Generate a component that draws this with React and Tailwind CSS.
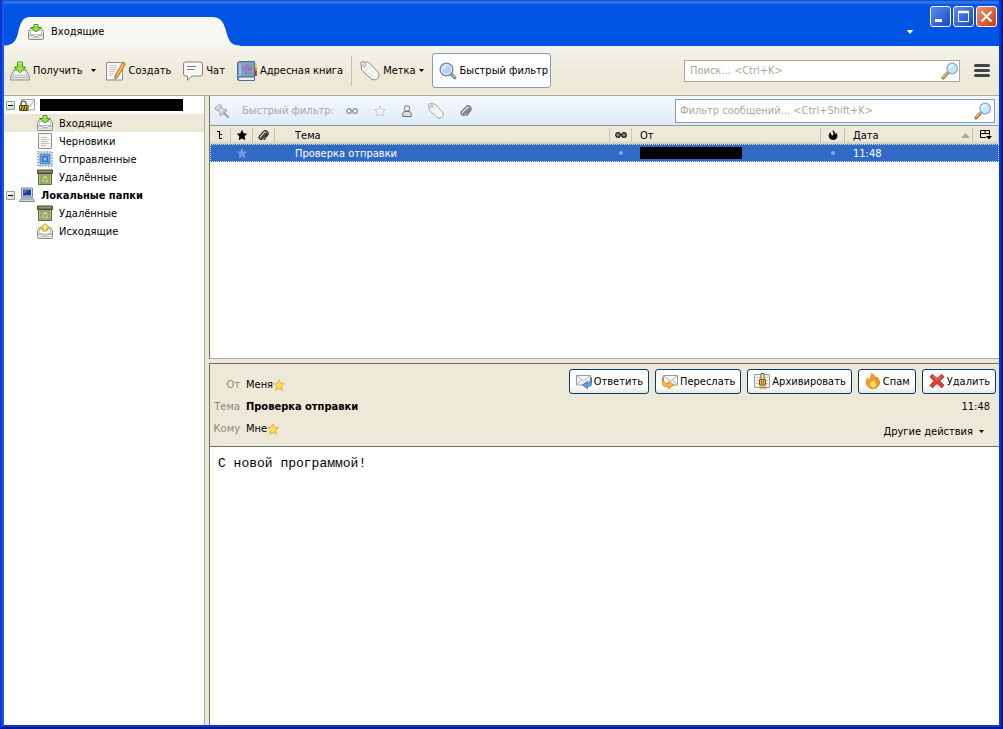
import React, { useState } from 'react';

/* ---------- icons ---------- */

const GetMailIcon = ({ className }) => (
  <svg className={className} viewBox="0 0 20 20" fill="none">
    <path d="M4 8.500h12l3.400 7.500v3H.6v-3z" fill="#e4e4e2" stroke="#8f8f8c" />
    <path d="M3 14l1.500-4h11l1.500 4z" fill="#fbfbfb" stroke="#bcbcb8" strokeWidth=".8" />
    <path d="M1.500 16.300h17" stroke="#b4b4b0" />
    <path d="M7.500 1h5v5h3.300L10 11.800 4.200 6h3.300z" fill="#9fe04a" stroke="#4c9a1a" />
    <path d="M8.500 2.200h3" stroke="#d3f5a4" />
  </svg>
);

const WriteIcon = ({ className }) => (
  <svg className={className} viewBox="0 0 20 20" fill="none">
    <path d="M.5 1.500h16v17.500H.5z" fill="#fafafa" stroke="#8b8b89" />
    <path d="M3 4.500h8M3 6.500h9M3 8.500h8M3 10.500h6M3 12.500h5M3 14.500h4" stroke="#cccccc" />
    <path d="M17 1.200l2.600 1.600-7.600 13-3 2.400.2-4z" fill="#f49a2d" stroke="#b3661a" strokeWidth=".8" />
    <path d="M17.700 2.700L10.500 15" stroke="#ffd08a" />
    <path d="M9.200 14.200l2.800 1.600-3 2.400z" fill="#f0dcb8" stroke="#6b5136" strokeWidth=".6" />
  </svg>
);

const ChatIcon = ({ className }) => (
  <svg className={className} viewBox="0 0 20 20" fill="none">
    <path d="M2.500 1h15a2 2 0 0 1 2 2v10a2 2 0 0 1-2 2H9l-4.500 4.300v-4.300h-2a2 2 0 0 1-2-2V3a2 2 0 0 1 2-2z" fill="#f8f8f7" stroke="#858583" />
    <path d="M4 5.500h9M4 8.500h7" stroke="#77787a" strokeWidth="1.200" />
  </svg>
);

const BookIcon = ({ className }) => (
  <svg className={className} viewBox="0 0 20 20" fill="none">
    <path d="M17 2h2.800v4.500H17z" fill="#f3d33c" />
    <path d="M17 6.500h2.800V11H17z" fill="#e0862a" />
    <path d="M17 10h2.800v5H17z" fill="#c9281f" />
    <path d="M2.500.5h15v15.500H4v3.500H2a1.500 1.500 0 0 1-1.500-1.500V2.500a2 2 0 0 1 2-2z" fill="#7f9fc8" stroke="#4c6c99" />
    <path d="M3 16h14.500v3.500H3a1.700 1.700 0 0 1 0-3.500z" fill="#e8edf4" stroke="#4c6c99" />
    <path d="M3 2v13" stroke="#b5cae4" strokeWidth="1.300" />
    <circle cx="10.500" cy="8" r="1.700" stroke="#a55f9c" />
    <path d="M12.200 6.300v2.500c0 1.300 2.200 1 2.200-1 0-5.400-8-4.800-8 .2 0 4.300 4.400 5.200 6.600 3.600" stroke="#a55f9c" strokeWidth=".9" />
  </svg>
);

const TagIcon = ({ className }) => (
  <svg className={className} viewBox="0 0 20 20" fill="none">
    <path d="M1.500.9l5.800.3c1 .1 1.900.6 2.700 1.400l7.700 8.200c1.500 1.700 1.900 4.400.2 6.300-1.600 1.900-4.600 2.400-6.500.9L3 10.400c-.8-.7-1.300-1.500-1.500-2.500L.8 2z" fill="#f8f8f5" stroke="#898986" />
    <path d="M5.500 10l5-6M7.500 11.500l5.500 3M9.500 8l5 4" stroke="#d8d8d3" strokeWidth=".9" />
    <circle cx="4.400" cy="4.400" r="1.600" fill="#fff" stroke="#8d8d8a" strokeWidth=".9" />
  </svg>
);

const FilterLensIcon = ({ className }) => (
  <svg className={className} viewBox="0 0 18 18" fill="none">
    <path d="M12 12l3.800 3.600" stroke="#6b7b8c" strokeWidth="3.200" strokeLinecap="round" />
    <path d="M12.500 12.300l3.300 3" stroke="#b5c6d8" strokeWidth="1.200" strokeLinecap="round" />
    <circle cx="7.500" cy="7.500" r="6.400" fill="#b4d1f3" stroke="#7388a0" strokeWidth="1.300" />
    <circle cx="7.500" cy="7.500" r="5" stroke="#e8f3ff" />
    <path d="M4.500 7.500a3 3 0 0 1 3-3" stroke="#fff" strokeWidth="1.300" />
  </svg>
);

const SearchIcon = ({ className }) => (
  <svg className={className} viewBox="0 0 18 18" fill="none">
    <path d="M2 15.800l5.200-5.300" stroke="#a0703a" strokeWidth="3.200" strokeLinecap="round" />
    <path d="M2.100 15.300l4.500-4.600" stroke="#efb570" strokeWidth="1.500" strokeLinecap="round" />
    <circle cx="11.200" cy="6.500" r="5.300" fill="#c6e6fd" stroke="#8aa9d0" strokeWidth="1.200" />
    <path d="M8 6a3.400 3.400 0 0 1 3.500-2.600" stroke="#fff" strokeWidth="1.500" strokeLinecap="round" />
  </svg>
);

const TrayShape = () => (
  <>
    <path d="M2.500 4.500h11l2 3v6.500a1.500 1.500 0 0 1-1.500 1.500H2A1.500 1.500 0 0 1 .5 14V7.500z" fill="#eeeeec" stroke="#8b8b88" />
    <path d="M2.500 6.500h11v4h-11z" fill="#fff" stroke="#b9b9b5" strokeWidth=".8" />
    <path d="M1 11.200h4l1 1.500h4l1-1.500h4" stroke="#a2a29e" />
    <path d="M2.500 13.800h11" stroke="#c8c8c4" />
  </>
);

const InboxIcon = ({ className }) => (
  <svg className={className} viewBox="0 0 16 16" fill="none">
    <TrayShape />
    <path d="M6 .5h4v3h3.300L8 8 2.700 3.500H6z" fill="#94dc4c" stroke="#479417" />
    <path d="M7 1.500h2" stroke="#cdf3a0" />
  </svg>
);

const OutboxIcon = ({ className }) => (
  <svg className={className} viewBox="0 0 16 16" fill="none">
    <TrayShape />
    <path d="M6 8h4V5h3.300L8 .6 2.700 5H6z" fill="#fbe887" stroke="#c59a2c" />
  </svg>
);

const DraftsIcon = ({ className }) => (
  <svg className={className} viewBox="0 0 16 16" fill="none">
    <path d="M1.500.5h13v15h-13z" fill="#f6f6f5" stroke="#8f8f8c" />
    <path d="M4 4.500h6M4 6.500h8M4 8.500h7M4 10.500h8M4 12.500h5" stroke="#bdbdbb" />
  </svg>
);

const SentIcon = ({ className }) => (
  <svg className={className} viewBox="0 0 16 16" fill="none">
    <path d="M1 1h14v14H1z" fill="#f5f8fb" stroke="#7c8b9b" strokeWidth="1.400" strokeDasharray="1.500 1.300" />
    <path d="M3 3h10v10H3z" fill="#6ba6e6" stroke="#3f7cc4" />
    <path d="M5.500 5.500h5v5h-5z" fill="#4f8dd8" stroke="#3570b8" />
    <circle cx="8" cy="8" r="1.500" fill="#9cc8f5" />
  </svg>
);

const TrashIcon = ({ className }) => (
  <svg className={className} viewBox="0 0 16 16" fill="none">
    <path d="M1.500 4.500h13v11h-13z" fill="#93a862" stroke="#5e6b3a" />
    <path d="M.5 1h15v3.500H.5z" fill="#6f7350" stroke="#474a30" />
    <path d="M1.500 2.300h13" stroke="#9c9f7a" />
    <path d="M2.500 5.500v9M13.500 5.500v9" stroke="#b4c586" />
    <path d="M6 9.500l2-2 2 2M10.500 10.500l-1 2.500H8M5.500 10.500l1 2.500" stroke="#d5e2b0" strokeWidth="1.100" />
  </svg>
);

const AccountIcon = ({ className }) => (
  <svg className={className} viewBox="0 0 16 16" fill="none">
    <path d="M2.500 2.500h13v10.500h-13z" fill="#f7f7f5" stroke="#a5a5a2" />
    <path d="M9 8l2 1.500 4-6" stroke="#a9a9a6" />
    <path d="M2 8V6.500a2.500 2.500 0 0 1 5 0V8" stroke="#55523e" strokeWidth="1.200" />
    <path d="M.5 8.500h8.500v5H.5z" fill="#dcc04c" stroke="#5b4a10" />
    <path d="M2 13l1.500-4M4.500 13L6 9M7 13l1-3" stroke="#3c320c" strokeWidth="1.100" />
  </svg>
);

const ComputerIcon = ({ className }) => (
  <svg className={className} viewBox="0 0 16 16" fill="none">
    <path d="M2.500 1h11v9h-11z" fill="#d4d8de" stroke="#7d8796" />
    <path d="M4 2.500h8v6H4z" fill="#1f3f94" />
    <path d="M4.500 3h5l-5 4z" fill="#4f74cc" />
    <path d="M2.500 11h11l2 3.500H.5z" fill="#e1e3e7" stroke="#7d8796" />
    <path d="M3 12.700h10" stroke="#9aa2af" />
  </svg>
);

const PinIcon = ({ className }) => (
  <svg className={className} viewBox="0 0 16 16" fill="none">
    <path d="M9.500 9.500L14 14" stroke="#9a9c9f" strokeWidth="2" strokeLinecap="round" />
    <path d="M1 5.200L5.600 1.300l1.800 1.500-.3 1.600 2.600 2 2.300-.2 1 1.300-6 5.300-1.300-1 .4-2.300-2.200-2.500-1.600.1z" fill="#dfe2e6" stroke="#97999d" />
    <path d="M4 6.500l3.200-2.600M7 11l4.500-4" stroke="#a9abae" />
  </svg>
);

const GlassesIcon = ({ className, dark }) => (
  <svg className={className} viewBox="0 0 12 6" fill="none">
    <circle cx="3" cy="3" r="2.300" fill={dark ? '#8d8d85' : '#f2f4f5'} stroke={dark ? '#1c1c1c' : '#8a8f93'} strokeWidth="1.200" />
    <circle cx="9" cy="3" r="2.300" fill={dark ? '#8d8d85' : '#f2f4f5'} stroke={dark ? '#1c1c1c' : '#8a8f93'} strokeWidth="1.200" />
    <path d="M5 2.500h2" stroke={dark ? '#1c1c1c' : '#8a8f93'} strokeWidth="1.200" />
  </svg>
);

const StarIcon = ({ className, fill, stroke }) => (
  <svg className={className} viewBox="0 0 12 12" fill="none">
    <path d="M6 .8l1.600 3.400 3.700.5-2.700 2.600.7 3.900L6 9.400l-3.300 1.800.7-3.900L.7 4.700l3.700-.5z" fill={fill} stroke={stroke} strokeLinejoin="round" />
  </svg>
);

const PersonIcon = ({ className }) => (
  <svg className={className} viewBox="0 0 10 12" fill="none">
    <path d="M.7 11.500V8.700C.7 7 2 6.500 5 6.500s4.300.5 4.300 2.200v2.800z" fill="#dededc" stroke="#6f6f6c" />
    <circle cx="5" cy="3.500" r="2.700" fill="#f2f2f0" stroke="#6f6f6c" />
  </svg>
);

const ClipIcon = ({ className, color }) => (
  <svg className={className} viewBox="0 0 12 12" fill="none">
    <path d="M3.200 8.600l4.600-5c1-1 2.300.2 1.400 1.300L5 9.500C3.300 11.300.2 9.300 1.400 6.900L6.200 1.600C8.300-.4 12 1.800 10.900 5L6.700 10.500" stroke={color} strokeWidth="1.300" strokeLinecap="round" />
    <path d="M5 8l3-3.200" stroke={color} strokeWidth=".7" strokeLinecap="round" />
  </svg>
);

const ThreadIcon = () => (
  <svg className="h-2.5 w-1.5" viewBox="0 0 6 10" fill="none">
    <path d="M0 1.500h3M2.500 1v7.500H5M2.500 4.500H5" stroke="#000" />
  </svg>
);

const JunkIcon = () => (
  <svg className="h-2.5 w-2.5" viewBox="0 0 10 10">
    <path d="M4.700 0c-.5 1.600.9 2.600.8 4-.1 1.200-1 1.700-1.800 1.200C2.800 4.600 3 3.300 2.700 2.300 1.300 3.200.5 4.700.8 6.400 1.100 8.500 3 10 5.100 10c2.400 0 4.200-1.800 4.300-4.100.1-1.500-.7-2.600-1.700-3.400.1 1-.1 1.700-.6 2C7.300 2.700 6.300 1 4.700 0z" />
  </svg>
);

const PickerIcon = () => (
  <svg className="h-2.5 w-3" viewBox="0 0 12 10" fill="none">
    <path d="M.5.5h9v5M.5.5v7H6M.5 3.500h9M5 .5v3" stroke="#000" />
    <path d="M6 6h6L9 9.500z" fill="#000" />
  </svg>
);

const ReplyIcon = () => (
  <svg className="h-4 w-4" viewBox="0 0 16 16" fill="none">
    <path d="M.5 2.500h14v9.500H.5z" fill="#fafafa" stroke="#9a9a97" />
    <path d="M1 3l6.500 5L14 3M1 11.500l4-4.500" stroke="#ababa8" />
    <path d="M15.500 4.500v6c0 2-1 3-3 3h-1v2.200L6.500 12l5-3.700v2.200c1.500 0 2.500-2 4-6z" fill="#6d9be0" stroke="#3a62a8" strokeWidth=".8" />
  </svg>
);

const ForwardIcon = () => (
  <svg className="h-4 w-4" viewBox="0 0 16 16" fill="none">
    <path d="M1.500 2.500h14v9.500h-14z" fill="#fafafa" stroke="#9a9a97" />
    <path d="M2 3l6.500 5L15 3M15 11.500l-4-4.500" stroke="#ababa8" />
    <path d="M.5 4.500v6c0 2 1 3 3 3h3v2.200l5.500-3.900-5.500-3.500v2.200h-2C3 10.500 1.500 8.500.5 4.500z" fill="#fbb64a" stroke="#cf7d1a" strokeWidth=".8" />
  </svg>
);

const ArchiveIcon = () => (
  <svg className="h-4 w-4" viewBox="0 0 16 16" fill="none">
    <path d="M.5 1.500h15v13H.5z" fill="#f1f1ef" stroke="#9b9b98" />
    <path d="M2 4.500h12M2 7.500h12M2 10.500h12" stroke="#c5c5c2" />
    <path d="M7 .5h3V7H7z" fill="#f4ead0" stroke="#7a5a1c" />
    <path d="M5.500 6.500h6v5.500h-6z" fill="#e8b23e" stroke="#7a5310" />
    <path d="M7.500 8.200h2v2h-2z" fill="#fff" stroke="#7a5310" strokeWidth=".8" />
    <path d="M5.500 14.500h7" stroke="#c58a1c" strokeWidth="2" />
  </svg>
);

const SpamIcon = () => (
  <svg className="h-4 w-4" viewBox="0 0 16 16" fill="none">
    <path d="M6.500.5c3.500 1.700 4.700 4.200 4 6.800 1-.5 1.500-1.800 1.300-3.300 2 1.700 2.900 3.700 2.700 5.800-.4 3.300-3 5.700-6.500 5.700-3.500 0-6.200-2.200-6.600-5.500-.2-2 .3-3.600 1.400-5 .1 1.400.6 2.300 1.700 2.800C4.200 5 7.700 3.700 6.500.5z" fill="#f79a1e" stroke="#df7412" strokeWidth=".8" />
    <path d="M8.300 7c1 2 2.700 2.600 2.700 4.700 0 1.700-1.300 2.800-2.900 2.800-1.700 0-3-1.200-3-2.900C5.100 9.500 7.600 9 8.300 7z" fill="#ffe77a" />
  </svg>
);

const DeleteIcon = () => (
  <svg className="h-4 w-4" viewBox="0 0 16 16" fill="none">
    <path d="M3.300 1.500L8 5.500l4.700-4L15 3.700 10.700 8l4.300 4.300-2.300 2.500L8 10.500l-4.700 4.300L1 12.300 5.300 8 1 3.700z" fill="#e03a34" stroke="#a3211c" strokeWidth=".9" strokeLinejoin="round" />
    <path d="M3.300 3L8 7l4.700-4" stroke="#f0847c" />
  </svg>
);

const Caret = ({ className }) => (
  <svg className={className} viewBox="0 0 5 3">
    <path d="M0 0h5L2.500 3z" fill="currentColor" />
  </svg>
);

/* ---------- data ---------- */

const folderTree = [
  {
    id: 'account',
    icon: AccountIcon,
    redacted: true,
    children: [
      { id: 'inbox', label: 'Входящие', icon: InboxIcon },
      { id: 'drafts', label: 'Черновики', icon: DraftsIcon },
      { id: 'sent', label: 'Отправленные', icon: SentIcon },
      { id: 'trash', label: 'Удалённые', icon: TrashIcon },
    ],
  },
  {
    id: 'local',
    label: 'Локальные папки',
    icon: ComputerIcon,
    children: [
      { id: 'local-trash', label: 'Удалённые', icon: TrashIcon },
      { id: 'outbox', label: 'Исходящие', icon: OutboxIcon },
    ],
  },
];

const messageActions = [
  { label: 'Ответить', icon: ReplyIcon },
  { label: 'Переслать', icon: ForwardIcon },
  { label: 'Архивировать', icon: ArchiveIcon },
  { label: 'Спам', icon: SpamIcon },
  { label: 'Удалить', icon: DeleteIcon },
];

/* ---------- parts ---------- */

const TitleBar = () => (
  <header className="flex justify-between bg-[linear-gradient(to_bottom,#0a3fc4_0px,#3a7ef0_2px,#0054e3_5px)] h-[46px]">
    <div className="flex items-end">
      <svg className="h-[29px] w-6" viewBox="0 0 24 29">
        <path d="M0 29V28.500C7 28.500 11 26 13.500 18 16 8 17 0 26 0V29z" fill="#f8f7f1" />
      </svg>
      <div className="flex items-center gap-[7px] h-[29px] w-[184px] bg-[#f8f7f1]">
        <InboxIcon className="h-4 w-4" />
        <span>Входящие</span>
      </div>
      <svg className="h-[29px] w-7" viewBox="0 0 28 29">
        <path d="M0 0C8 0 11 4 13.500 12 16.500 23 18 28.500 28 28.500V29H0z" fill="#f8f7f1" />
      </svg>
    </div>
    <div className="flex gap-4 pr-[2px] pt-1.5">
      <button aria-label="Список вкладок" className="self-end pb-3 text-white">
        <Caret className="h-1 w-2" />
      </button>
      <div className="flex gap-0.5">
        <button aria-label="Свернуть" className="h-[21px] w-[21px] rounded-[3px] border border-white bg-gradient-to-br from-[#5b8cf2] to-[#1a48c4]">
          <svg viewBox="0 0 19 19"><path d="M4 12h7v3H4z" fill="#fff" /></svg>
        </button>
        <button aria-label="Развернуть" className="h-[21px] w-[21px] rounded-[3px] border border-white bg-gradient-to-br from-[#5b8cf2] to-[#1a48c4]">
          <svg viewBox="0 0 19 19" fill="none"><path d="M4.500 5v9.500h10V5" stroke="#fff" /><path d="M4 5h11" stroke="#fff" strokeWidth="2.500" /></svg>
        </button>
        <button aria-label="Закрыть" className="h-[21px] w-[21px] rounded-[3px] border border-white bg-gradient-to-br from-[#f0906f] to-[#c9360f]">
          <svg viewBox="0 0 19 19" fill="none"><path d="M4.500 4.500l10 10M14.500 4.500l-10 10" stroke="#fff" strokeWidth="2.200" /></svg>
        </button>
      </div>
    </div>
  </header>
);

const Toolbar = ({ onToggleFilter }) => (
  <div className="flex items-center gap-2 h-[50px] pl-1.5 pr-[9px] border-b border-[#aca899] bg-gradient-to-b from-[#f5f4ec] to-[#ece9d8] to-60%">
    <button className="flex items-center gap-[3px]">
      <GetMailIcon className="h-5 w-5" />Получить
    </button>
    <button aria-label="Получить: меню"><Caret className="h-[3px] w-[5px]" /></button>
    <button className="flex items-center gap-[3px] pl-0.5 pr-1">
      <WriteIcon className="h-5 w-5" />Создать
    </button>
    <button className="flex items-center gap-[3px] pr-1">
      <ChatIcon className="h-5 w-5" />Чат
    </button>
    <button className="flex items-center gap-[3px]">
      <BookIcon className="h-5 w-5" />Адресная книга
    </button>
    <div className="h-[30px] w-px bg-[#c5c2b2]" />
    <button className="flex items-center gap-[3px]">
      <TagIcon className="h-5 w-5" />Метка
      <Caret className="h-[3px] w-[5px]" />
    </button>
    <button
      onClick={onToggleFilter}
      className="flex items-center gap-[3px] h-[35px] pl-1.5 pr-0.5 rounded-[3px] border border-[#7f9db9] bg-white"
    >
      <FilterLensIcon className="h-[18px] w-[18px]" />Быстрый фильтр
    </button>
    <div className="flex-1 flex items-center justify-end gap-3.5">
      <label className="flex items-center w-[276px] h-[22px] pl-[5px] pr-0 border border-[#aca899] bg-white">
        <input type="text" aria-label="Поиск" placeholder="Поиск... <Ctrl+K>" className="flex-1 min-w-0 bg-transparent outline-none placeholder:text-[#aca899]" />
        <SearchIcon className="h-[18px] w-[18px]" />
      </label>
      <button aria-label="Меню" className="flex flex-col gap-0.5">
        <span className="h-[3px] w-4 rounded-full bg-[#3f4448]" />
        <span className="h-[3px] w-4 rounded-full bg-[#3f4448]" />
        <span className="h-[3px] w-4 rounded-full bg-[#3f4448]" />
      </button>
    </div>
  </div>
);

const FolderTree = ({ selected, onSelect }) => {
  const [closed, setClosed] = useState({});

  return (
    <nav className="w-[201px] shrink-0 border-r border-[#aca899] bg-white">
      {folderTree.map((account) => {
        const Icon = account.icon;
        return (
          <div key={account.id}>
            <div className="flex items-center h-[18px] pl-0.5">
              <button
                aria-label={closed[account.id] ? 'Развернуть' : 'Свернуть'}
                onClick={() => setClosed({ ...closed, [account.id]: !closed[account.id] })}
                className="flex items-center justify-center h-[9px] w-[9px] rounded-[1px] border border-[#7b9ebd] bg-gradient-to-br from-white to-[#d8d2c4]"
              >
                <span className="h-px w-[5px] bg-black" />
              </button>
              <Icon className="h-4 w-4 ml-1" />
              {account.redacted ? (
                <span className="h-3 w-[143px] ml-[5px] bg-black" />
              ) : (
                <span className="ml-1.5 font-bold">{account.label}</span>
              )}
            </div>
            {!closed[account.id] && account.children.map((folder) => {
              const FolderIcon = folder.icon;
              return (
                <button
                  key={folder.id}
                  onClick={() => onSelect(folder.id)}
                  className={`flex items-center gap-1.5 w-full h-[18px] pl-[33px] ${selected === folder.id ? 'bg-[#ece9d8]' : ''}`}
                >
                  <FolderIcon className="h-4 w-4" />
                  {folder.label}
                </button>
              );
            })}
          </div>
        );
      })}
    </nav>
  );
};

const QuickFilterBar = () => (
  <div className="flex items-center h-[30px] pl-1 pr-1 border-b border-[#919b9c] bg-gradient-to-b from-[#f4f9fe] to-[#dfebf9]">
    <button aria-label="Закрепить фильтр"><PinIcon className="h-4 w-4" /></button>
    <span className="ml-3 text-[#aca899]">Быстрый фильтр:</span>
    <div className="flex items-center gap-4 ml-3">
      <button aria-label="Непрочитанные"><GlassesIcon className="h-1.5 w-3" /></button>
      <button aria-label="Избранные"><StarIcon className="h-3 w-3" fill="#f1f5fa" stroke="#c3c7cc" /></button>
      <button aria-label="Контакт"><PersonIcon className="h-3 w-2.5" /></button>
      <button aria-label="Метки"><TagIcon className="h-4 w-4" /></button>
      <button aria-label="Вложения"><ClipIcon className="h-3 w-3" color="#6f7275" /></button>
    </div>
    <div className="flex-1 flex justify-end">
      <label className="flex items-center w-80 h-6 pl-1 pr-0.5 border border-[#7f9db9] bg-white">
        <input type="text" aria-label="Фильтр сообщений" placeholder="Фильтр сообщений... <Ctrl+Shift+K>" className="flex-1 min-w-0 bg-transparent outline-none placeholder:text-[#aca899]" />
        <SearchIcon className="h-[18px] w-[18px]" />
      </label>
    </div>
  </div>
);

const HeadCell = ({ children, className = '' }) => (
  <th scope="col" className="p-0 font-normal">
    <div className={`flex items-center h-3.5 border-r border-[#c9c5b3] ${className}`}>{children}</div>
  </th>
);

const MessageList = () => (
  <div className="flex-1 min-h-0 border-b border-[#aca899] bg-white">
    <table className="w-full table-fixed text-left">
      <colgroup>
        <col className="w-[21px]" />
        <col className="w-[22px]" />
        <col className="w-[22px]" />
        <col />
        <col className="w-[22px]" />
        <col className="w-[189px]" />
        <col className="w-6" />
        <col className="w-32" />
        <col className="w-[26px]" />
      </colgroup>
      <thead>
        <tr className="h-[18px] bg-gradient-to-b from-[#ece9d8] from-80% to-[#d3cfbf]">
          <HeadCell className="pl-[7px]"><ThreadIcon /></HeadCell>
          <HeadCell className="justify-center"><StarIcon className="h-3 w-3" fill="#000" stroke="none" /></HeadCell>
          <HeadCell className="justify-center"><ClipIcon className="h-[11px] w-[11px]" color="#222" /></HeadCell>
          <HeadCell className="pl-5">Тема</HeadCell>
          <HeadCell className="justify-center"><GlassesIcon className="h-1.5 w-3" dark /></HeadCell>
          <HeadCell className="pl-2">От</HeadCell>
          <HeadCell className="justify-center"><JunkIcon /></HeadCell>
          <HeadCell className="justify-between pl-2 pr-0.5">
            Дата
            <svg className="h-[5px] w-[9px]" viewBox="0 0 9 5"><path d="M4.500 0L9 5H0z" fill="#aca899" /></svg>
          </HeadCell>
          <HeadCell className="justify-center"><PickerIcon /></HeadCell>
        </tr>
      </thead>
      <tbody>
        <tr className="h-[18px] bg-[#316ac5] text-white outline-1 outline-dotted outline-[#d5e2f4] -outline-offset-1">
          <td className="p-0" />
          <td className="p-0"><StarIcon className="h-3 w-3 mx-auto" fill="#6f97da" stroke="none" /></td>
          <td className="p-0" />
          <td className="py-0 pl-5 pr-0">Проверка отправки</td>
          <td className="p-0"><div className="h-1 w-1 mx-auto rounded-full bg-[#86abe6]" /></td>
          <td className="py-0 pl-2 pr-0"><div className="h-3 w-[102px] bg-black" /></td>
          <td className="p-0"><div className="h-1 w-1 mx-auto rounded-full bg-[#86abe6]" /></td>
          <td className="py-0 pl-2 pr-0">11:48</td>
          <td className="p-0" />
        </tr>
      </tbody>
    </table>
  </div>
);

const MessageHeader = () => (
  <div className="flex justify-between border-b border-[#716f64] bg-[#ece9d8] pb-1.5">
    <dl className="grid grid-cols-[30px_1fr] auto-rows-[22px] items-center gap-x-1.5 pt-2.5">
      <dt className="text-right text-[#8a877a]">От</dt>
      <dd className="flex items-center">Меня<StarIcon className="h-3 w-3" fill="#fddc52" stroke="#e3b23a" /></dd>
      <dt className="text-right text-[#8a877a]">Тема</dt>
      <dd className="font-bold">Проверка отправки</dd>
      <dt className="text-right text-[#8a877a]">Кому</dt>
      <dd className="flex items-center">Мне<StarIcon className="h-3 w-3" fill="#fddc52" stroke="#e3b23a" /></dd>
    </dl>
    <div className="flex flex-col items-end pt-[5px] pr-[3px]">
      <div className="flex gap-1.5">
        {messageActions.map(({ label, icon: Icon }) => (
          <button
            key={label}
            className="flex items-center gap-0.5 h-[25px] pl-1.5 pr-[5px] rounded-[3px] border border-[#003c74] bg-gradient-to-b from-white from-70% to-[#e8e6dc]"
          >
            <Icon />{label}
          </button>
        ))}
      </div>
      <time className="mt-1 mr-1.5">11:48</time>
      <button className="flex items-center gap-1.5 mt-2 mr-3">
        Другие действия
        <Caret className="h-[3px] w-[5px]" />
      </button>
    </div>
  </div>
);

const App = () => {
  const [folder, setFolder] = useState('inbox');
  const [filterOpen, setFilterOpen] = useState(true);

  return (
    <div className="flex flex-col h-screen border-x-2 border-b-2 border-l-[#0b35d2] border-r-[#00179f] border-b-[#00179f] bg-[#ece9d8] font-['DejaVu_Sans_Condensed','DejaVu_Sans',sans-serif] text-[11px] leading-[17px] text-black">
      <div className="flex flex-col flex-1 min-h-0 border-x-2 border-b-2 border-l-[#1a5ae6] border-r-[#0a39cb] border-b-[#0a39cb]">
        <TitleBar />
        <Toolbar onToggleFilter={() => setFilterOpen(!filterOpen)} />
        <div className="flex flex-1 min-h-0">
          <FolderTree selected={folder} onSelect={setFolder} />
          <main className="flex flex-col flex-1 min-w-0 ml-1">
            <div className="flex flex-col flex-[263] min-h-0 border-l border-[#716f64]">
              {filterOpen && <QuickFilterBar />}
              <MessageList />
            </div>
            <div className="h-1 shrink-0" />
            <div className="flex flex-col flex-[362] min-h-0 border-l border-t border-[#716f64]">
              <MessageHeader />
              <article className="flex-1 px-2 pt-2 bg-white font-['Liberation_Mono',monospace] text-[13px]">
                <p>С новой программой!</p>
              </article>
            </div>
          </main>
        </div>
      </div>
    </div>
  );
};

export default App;
